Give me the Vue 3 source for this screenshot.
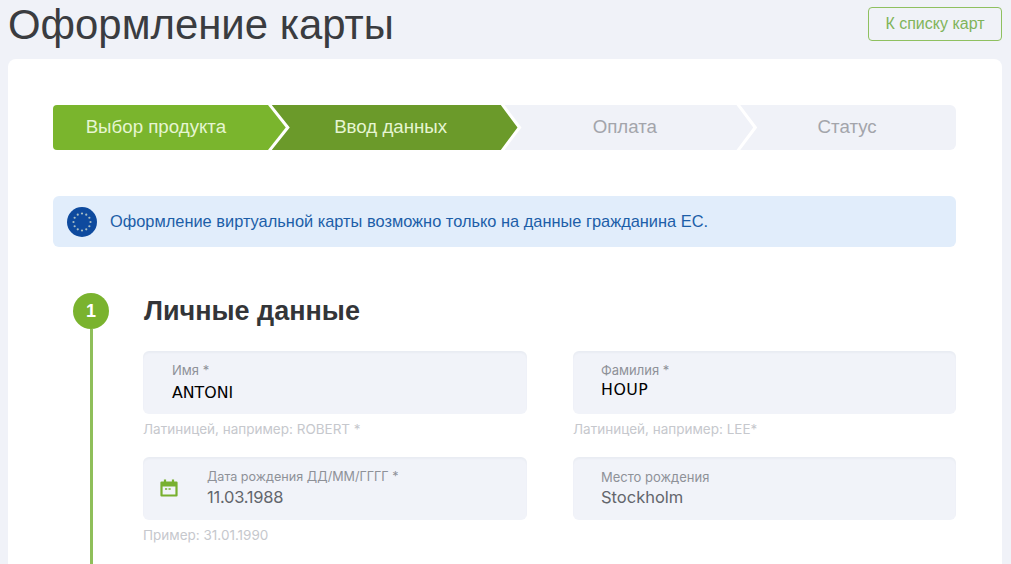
<script setup>
const steps = [
  { name: 'Выбор продукта', cls: 'done' },
  { name: 'Ввод данных', cls: 'active' },
  { name: 'Оплата', cls: 'todo' },
  { name: 'Статус', cls: 'last' }
]

// EU flag stars, 12 around the ring
const stars = Array.from({ length: 12 }, (_, i) => {
  const a = (i * Math.PI) / 6
  return { x: 15 + Math.cos(a) * 8.5, y: 15 + Math.sin(a) * 8.5 }
})
</script>

<template>
  <div class="page">
    <header class="top">
      <h1 class="title">Оформление карты</h1>
      <a class="back">К списку карт</a>
    </header>

    <main class="card">
      <div class="steps">
        <div v-for="s in steps" :key="s.name" class="step" :class="s.cls">{{ s.name }}</div>
      </div>

      <div class="notice">
        <svg class="eu" width="30" height="30" viewBox="0 0 30 30">
          <circle cx="15" cy="15" r="15" fill="#0e4a9e" />
          <circle v-for="(d, i) in stars" :key="i" :cx="d.x" :cy="d.y" r="1.1" fill="#a9bfc4" />
        </svg>
        <span>Оформление виртуальной карты возможно только на данные гражданина ЕС.</span>
      </div>

      <section class="section">
        <div class="rail">
          <div class="num">1</div>
          <div class="line"></div>
        </div>
        <div class="body">
          <h2 class="heading">Личные данные</h2>
          <div class="form">
            <div class="cell">
              <div class="field">
                <div class="label">Имя *</div>
                <div class="value typed first">ANTONI</div>
              </div>
              <div class="hint">Латиницей, например: ROBERT *</div>
            </div>
            <div class="cell">
              <div class="field right">
                <div class="label">Фамилия *</div>
                <div class="value typed wide">HOUP</div>
              </div>
              <div class="hint">Латиницей, например: LEE*</div>
            </div>
            <div class="cell">
              <div class="field lower with-icon">
                <svg class="cal" width="20" height="20" viewBox="0 0 20 20" fill="none">
                  <path d="M2.5 4.5h15v13h-15z" stroke="#78b02f" stroke-width="2.2" stroke-linejoin="round" />
                  <path d="M2.5 4h15v4.5h-15z" fill="#78b02f" />
                  <path d="M6 1.5v3M14 1.5v3" stroke="#78b02f" stroke-width="2.2" />
                  <path d="M6 11h2.2M9.5 11h2.2" stroke="#78b02f" stroke-width="1.6" />
                </svg>
                <div>
                  <div class="label tight">Дата рождения ДД/ММ/ГГГГ *</div>
                  <div class="value date">11.03.1988</div>
                </div>
              </div>
              <div class="hint">Пример: 31.01.1990</div>
            </div>
            <div class="cell">
              <div class="field lower right">
                <div class="label">Место рождения</div>
                <div class="value">Stockholm</div>
              </div>
            </div>
          </div>
        </div>
      </section>
    </main>
  </div>
</template>

<style>
html, body { margin: 0; background: #f0f2f8; overflow: hidden; }
</style>

<style scoped>
.page {
  height: 564px;
  overflow: hidden;
  box-sizing: border-box;
  padding: 0 9px 0 8px;
  background: #f0f2f8;
  font-family: "Liberation Sans", Arial, sans-serif;
}
.top { height: 59px; display: flex; justify-content: space-between; align-items: flex-start; }
.title { margin: 0; font-size: 41.9px; line-height: 50px; font-weight: 400; color: #3a3c40; }
.back {
  margin-top: 7px;
  width: 134px;
  height: 34px;
  box-sizing: border-box;
  border: 1px solid #8fc060;
  border-radius: 4px;
  display: flex;
  align-items: center;
  justify-content: center;
  font-size: 16px;
  color: #80b45a;
}
.card { background: #fff; border-radius: 8px; padding: 46px 46px 0 45px; height: 600px; box-sizing: border-box; }

.steps { display: flex; height: 45px; }
.step {
  height: 45px;
  display: flex;
  align-items: center;
  justify-content: center;
  font-size: 18.7px;
  box-sizing: border-box;
  padding-bottom: 1px;
  position: relative;
}
.done {
  width: 233px;
  padding-right: 27px;
  color: #e6f5d2;
  background: #7ab52d;
  border-radius: 4px 0 0 4px;
  clip-path: polygon(0 0, 215px 0, 100% 50%, 215px 100%, 0 100%);
  z-index: 3;
}
.active {
  width: 246px;
  margin-left: -14px;
  padding-right: 8px;
  color: #e6f5d2;
  background: #6b9a2a;
  clip-path: polygon(0 0, 229px 0, 100% 50%, 229px 100%, 0 100%, 18px 50%);
  z-index: 2;
}
.todo {
  width: 249px;
  margin-left: -13px;
  padding-right: 8px;
  color: #a3a5ab;
  background: #f0f2f8;
  clip-path: polygon(0 0, 232px 0, 100% 50%, 232px 100%, 0 100%, 17px 50%);
  z-index: 1;
}
.last {
  width: 216px;
  margin-left: -13px;
  padding-right: 2px;
  color: #a3a5ab;
  background: #f0f2f8;
  border-radius: 0 6px 6px 0;
  clip-path: polygon(0 0, 100% 0, 100% 100%, 0 100%, 17px 50%);
}

.notice {
  margin-top: 46px;
  height: 51px;
  box-sizing: border-box;
  border-radius: 6px;
  background: #e1edfb;
  display: flex;
  align-items: center;
  gap: 13px;
  padding-left: 14px;
  font-size: 16.4px;
  color: #1c5ea8;
}
.notice span { margin-top: -1px; }
.eu { flex: none; }

.section { margin-top: 46px; display: flex; padding-left: 20px; min-height: 300px; }
.rail { width: 36px; display: flex; flex-direction: column; align-items: center; margin-right: 34px; }
.num {
  width: 36px;
  height: 36px;
  border-radius: 50%;
  background: #7ab32e;
  color: #fff;
  font-weight: 700;
  font-size: 18px;
  display: flex;
  align-items: center;
  justify-content: center;
}
.line { width: 3px; flex: 1; background: #8fbf5a; }
.body { flex: 1; }
.heading { margin: 0 0 22px 1px; font-size: 27px; line-height: 36px; font-weight: 700; color: #333538; }

.form { display: grid; grid-template-columns: 384px 383px; column-gap: 46px; row-gap: 20px; }
.field {
  height: 63px;
  box-sizing: border-box;
  padding: 11px 0 0 29px;
  border-radius: 6px;
  background: #f1f3f9;
  box-shadow: inset 0 2px 2px rgba(60, 70, 100, 0.04);
}
.right { padding-left: 28px; }
.lower { padding-top: 12px; }
.with-icon { display: flex; align-items: flex-start; padding-left: 16px; gap: 28px; }
.cal { margin-top: 9px; flex: none; }
.label { font-family: Inter, "Liberation Sans", sans-serif; font-size: 13px; line-height: 16px; color: #8e9198; }
.tight { font-size: 12.6px; }
.value { font-family: Inter, "Liberation Sans", sans-serif; margin-top: 2px; font-size: 16.5px; line-height: 20px; color: #63666c; }
.date { letter-spacing: -0.25px; }
.typed { font-family: "DejaVu Sans", sans-serif; color: #000; font-size: 15.8px; }
.first { margin-top: 5px; }
.wide { letter-spacing: 0.5px; }
.hint { font-family: Inter, "Liberation Sans", sans-serif; margin-top: 7px; font-size: 13.5px; line-height: 16px; color: #c6c8cd; }
</style>
